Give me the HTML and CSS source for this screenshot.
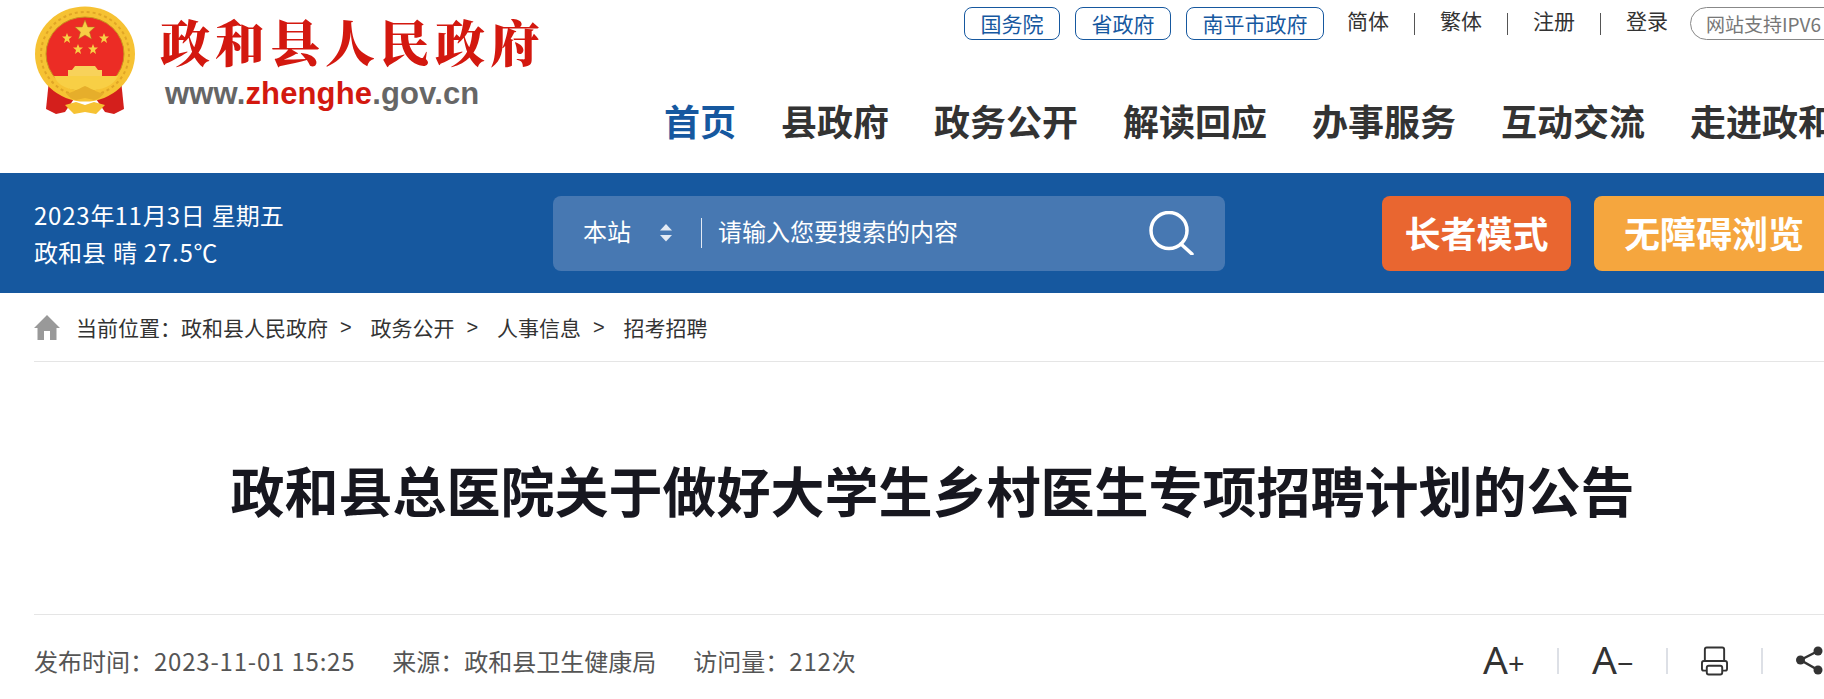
FILE: index.html
```html
<!DOCTYPE html>
<html lang="zh-CN">
<head>
<meta charset="utf-8">
<title>政和县总医院关于做好大学生乡村医生专项招聘计划的公告</title>
<link rel="stylesheet" href="styles.css">
</head>
<body>
<header class="header">
  <div class="logo">
    <svg class="emblem" viewBox="0 0 104 110" aria-hidden="true">
      <path d="M15 74 L12 103 L22 108 L31 106 L42 90 Z" fill="#d41f1c"/>
      <path d="M87 74 L90 103 L80 108 L71 106 L60 90 Z" fill="#d41f1c"/>
      <ellipse cx="51" cy="48" rx="50" ry="47.500" fill="#f6c233"/>
      <ellipse cx="51" cy="48" rx="44" ry="42" fill="none" stroke="#e0a526" stroke-width="2" stroke-dasharray="3 3"/>
      <ellipse cx="51" cy="48" rx="39" ry="37" fill="#ec2c25" stroke="#c9931f" stroke-width="1"/>
      <polygon fill="#f8cf45" stroke="#a8791c" stroke-width=".5" points="51,14 53.8,21 61,21 55.5,26 57.5,33 51,29 44.5,33 46.5,26 41,21 48.2,21"/>
      <polygon fill="#f8cf45" points="33,27 34.4,30.5 38,30.5 35,33 36,37 33,34.8 30,37 31,33 28,30.5 31.6,30.5"/>
      <polygon fill="#f8cf45" points="70,27 71.4,30.5 75,30.5 72,33 73,37 70,34.8 67,37 68,33 65,30.5 68.6,30.5"/>
      <polygon fill="#f8cf45" points="44,38 45.4,41.5 49,41.5 46,44 47,48 44,45.8 41,48 42,44 39,41.5 42.6,41.5"/>
      <polygon fill="#f8cf45" points="59,38 60.4,41.5 64,41.5 61,44 62,48 59,45.8 56,48 57,44 54,41.5 57.6,41.5"/>
      <path d="M41 60 H61 L64 64 H68 V71 H34 V64 H38 Z" fill="#f8d25a"/>
      <path d="M20 70 H84 Q78 84 51 85 Q25 84 20 70 Z" fill="#f8cf45"/>
      <path d="M51 80 C42 84 36 88 32 87 C34 90 38 94 42 94 L51 92 L60 94 C64 94 68 90 70 87 C66 88 60 84 51 80 Z" fill="#e6ae2b"/>
      <path d="M31 99 L42 96 L51 99 L60 96 L71 99 L62 108 L51 106 L40 108 Z" fill="#f6c233"/>
    </svg>
    <div class="logo-text">
      <div class="logo-title">政和县人民政府</div>
      <div class="logo-url">www.<span class="logo-red">zhenghe</span>.gov.cn</div>
    </div>
  </div>
  <div class="head-right">
    <div class="top-row">
      <a class="top-btn">国务院</a>
      <a class="top-btn">省政府</a>
      <a class="top-btn">南平市政府</a>
      <ul class="top-links">
        <li>简体</li><li class="bar"></li>
        <li>繁体</li><li class="bar"></li>
        <li>注册</li><li class="bar"></li>
        <li>登录</li>
      </ul>
      <span class="ipv6">网站支持IPV6</span>
    </div>
    <nav class="nav">
      <a class="nav-item active">首页</a>
      <a class="nav-item">县政府</a>
      <a class="nav-item">政务公开</a>
      <a class="nav-item">解读回应</a>
      <a class="nav-item">办事服务</a>
      <a class="nav-item">互动交流</a>
      <a class="nav-item">走进政和</a>
    </nav>
  </div>
</header>

<section class="band">
  <div class="date">
    <div><span class="num">2023</span>年<span class="num">11</span>月<span class="num">3</span>日 星期五</div>
    <div>政和县 晴 <span class="num">27.5</span>℃</div>
  </div>
  <div class="search">
    <span class="scope">本站</span>
    <svg class="updown" viewBox="0 0 14 18" aria-hidden="true">
      <polygon points="7,0 13,6.5 1,6.5" fill="#e3eaf4"/>
      <polygon points="1,11 13,11 7,17.5" fill="#e3eaf4"/>
    </svg>
    <span class="search-line"></span>
    <span class="placeholder">请输入您要搜索的内容</span>
    <svg class="search-icon" viewBox="0 0 46 44" aria-hidden="true">
      <circle cx="20" cy="19.500" r="18" fill="none" stroke="#fff" stroke-width="3.500"/>
      <path d="M32 33 L43 43" stroke="#fff" stroke-width="3.500" stroke-linecap="round"/>
    </svg>
  </div>
  <a class="mode mode-elder">长者模式</a>
  <a class="mode mode-access">无障碍浏览</a>
</section>

<main class="main">
  <div class="crumbs">
    <svg class="home" viewBox="0 0 26 25" aria-hidden="true">
      <path d="M13 0 L26 13 H22.500 V25 H16 V16 H10 V25 H3.500 V13 H0 Z" fill="#999"/>
    </svg>
    <span class="crumb-label">当前位置：</span>
    <span>政和县人民政府</span><span class="gt">&gt;</span>
    <span>政务公开</span><span class="gt">&gt;</span>
    <span>人事信息</span><span class="gt">&gt;</span>
    <span>招考招聘</span>
  </div>
  <h1 class="title">政和县总医院关于做好大学生乡村医生专项招聘计划的公告</h1>
  <div class="meta">
    <div class="meta-info">
      <span>发布时间：<span class="num">2023-11-01 15:25</span></span>
      <span>来源：政和县卫生健康局</span>
      <span>访问量：<span class="num">212</span>次</span>
    </div>
    <div class="tools">
      <span class="font-tool">A<small>+</small></span>
      <i class="tool-bar"></i>
      <span class="font-tool">A<small>−</small></span>
      <i class="tool-bar"></i>
      <svg class="print" viewBox="0 0 28 30" aria-hidden="true">
        <path d="M4 15 V3 a2 2 0 0 1 2 -2 H22 a2 2 0 0 1 2 2 V15" fill="none" stroke="#333" stroke-width="2"/>
        <path d="M6 25 H3 a2 2 0 0 1 -2 -2 V17 a2 2 0 0 1 2 -2 H25 a2 2 0 0 1 2 2 V23 a2 2 0 0 1 -2 2 H22" fill="none" stroke="#333" stroke-width="2"/>
        <rect x="6" y="20" width="16" height="9" rx="2" fill="none" stroke="#333" stroke-width="2"/>
      </svg>
      <i class="tool-bar"></i>
      <svg class="share" viewBox="0 0 28 30" aria-hidden="true">
        <path d="M22 5 L4.500 14 L22 24" fill="none" stroke="#333" stroke-width="2.500"/>
        <circle cx="4.500" cy="14" r="4.500" fill="#333"/>
        <circle cx="22" cy="5" r="4.500" fill="#333"/>
        <circle cx="22" cy="24" r="4.500" fill="#333"/>
      </svg>
    </div>
  </div>
</main>
</body>
</html>
```
FILE: styles.css
```css
* { box-sizing: border-box; }
html, body {
  margin: 0;
  padding: 0;
  width: 1824px;
  height: 699px;
  overflow: hidden;
  background: #fff;
}
body {
  font-family: "Noto Sans CJK SC", "Noto Sans", sans-serif;
  color: #333;
}
.num { letter-spacing: 0.8px; }
.header {
  display: flex;
  height: 173px;
  padding-left: 34px;
}
.logo {
  display: flex;
  flex: none;
  width: 630px;
  padding-top: 6px;
}
.emblem {
  flex: none;
  width: 104px;
  height: 110px;
}
.logo-text {
  margin-left: 22px;
  padding-top: 3px;
}
.logo-title {
  font-family: "Noto Serif CJK SC", "Noto Sans CJK SC", serif;
  font-size: 50px;
  font-weight: 900;
  line-height: 62px;
  letter-spacing: 5px;
  color: #d3180f;
  white-space: nowrap;
}
.logo-url {
  margin-top: 5px;
  margin-left: 5px;
  font-family: "Liberation Sans", sans-serif;
  font-size: 31px;
  font-weight: 700;
  line-height: 36px;
  letter-spacing: 0.15px;
  color: #666;
}
.logo-red { color: #d3180f; }
.head-right {
  flex: none;
  padding-top: 7px;
}
.top-row {
  display: flex;
  align-items: flex-start;
  height: 33px;
  padding-left: 300px;
}
.top-btn {
  flex: none;
  height: 33px;
  margin-right: 15px;
  padding: 0 15.500px;
  border: 1px solid #16589f;
  border-radius: 8px;
  font-size: 21px;
  line-height: 31px;
  color: #16589f;
  white-space: nowrap;
}
.top-links {
  display: flex;
  align-items: center;
  flex: none;
  height: 27px;
  margin: 0 0 0 8px;
  padding: 0;
  list-style: none;
  font-size: 21px;
  line-height: 27px;
  color: #333;
}
.top-links .bar {
  width: 1px;
  height: 22px;
  margin: 7px 25px 0;
  background: #555;
}
.ipv6 {
  flex: none;
  height: 33px;
  margin-left: 22px;
  padding: 0 20px 0 15px;
  border: 1px solid #888;
  border-radius: 17px;
  font-size: 19px;
  line-height: 31px;
  color: #777;
  white-space: nowrap;
}
.nav {
  display: flex;
  gap: 45px;
  margin-top: 55px;
}
.nav-item {
  flex: none;
  font-size: 36px;
  font-weight: 700;
  line-height: 50px;
  color: #333;
  white-space: nowrap;
}
.nav-item.active { color: #16589f; }

.band {
  display: flex;
  align-items: center;
  height: 120px;
  padding-left: 34px;
  background: #16589f;
  color: #fff;
}
.date {
  flex: none;
  width: 519px;
  padding-bottom: 1px;
  font-size: 24px;
  line-height: 37px;
  word-spacing: 1.500px;
}
.search {
  display: flex;
  align-items: center;
  flex: none;
  width: 672px;
  height: 75px;
  padding-left: 30px;
  border-radius: 8px;
  background: #4778b2;
}
.scope {
  padding-bottom: 4px;
  font-size: 24px;
  line-height: 34px;
}
.updown {
  flex: none;
  width: 14px;
  height: 18px;
  margin-left: 28px;
}
.search-line {
  flex: none;
  width: 1px;
  height: 30px;
  margin: 0 16px 0 28px;
  background: #e3eaf4;
}
.placeholder {
  flex: none;
  width: 431px;
  padding-bottom: 4px;
  font-size: 24px;
  line-height: 34px;
}
.search-icon {
  flex: none;
  width: 46px;
  height: 44px;
}
.mode {
  flex: none;
  height: 75px;
  border-radius: 8px;
  font-size: 36px;
  font-weight: 700;
  line-height: 73px;
  text-align: center;
  color: #fff;
  white-space: nowrap;
}
.mode-elder {
  width: 189px;
  margin-left: 157px;
  background: #e96630;
}
.mode-access {
  width: 240px;
  margin-left: 23px;
  background: #f5a63e;
}

.main {
  width: 1797px;
  margin-left: 34px;
}
.crumbs {
  display: flex;
  align-items: center;
  height: 69px;
  border-bottom: 1px solid #e5e5e5;
  font-size: 21px;
  line-height: 30px;
  color: #333;
}
.home {
  flex: none;
  width: 26px;
  height: 25px;
  margin-right: 16px;
}
.gt {
  width: 42.500px;
  padding-left: 12px;
  font-family: "Liberation Sans", sans-serif;
  font-size: 20px;
}
.title {
  height: 253px;
  margin: 0;
  padding-top: 93px;
  border-bottom: 1px solid #e5e5e5;
  font-size: 54px;
  font-weight: 700;
  line-height: 70px;
  text-align: center;
  color: #17171f;
  white-space: nowrap;
}
.meta {
  display: flex;
  align-items: center;
  justify-content: space-between;
  height: 92px;
}
.meta-info {
  display: flex;
  gap: 37px;
  font-size: 24px;
  line-height: 34px;
  color: #555;
  white-space: nowrap;
}
.tools {
  display: flex;
  align-items: center;
  gap: 33px;
  width: 348px;
  flex: none;
}
.font-tool {
  flex: none;
  width: 41px;
  font-family: "Noto Sans", sans-serif;
  font-size: 39px;
  line-height: 44px;
  color: #333;
  white-space: nowrap;
}
.font-tool small {
  font-size: 29px;
}
.tool-bar {
  flex: none;
  width: 2px;
  height: 26px;
  background: #dde0e6;
}
.print {
  flex: none;
  width: 27px;
  height: 30px;
}
.share {
  flex: none;
  width: 28px;
  height: 30px;
}
```
